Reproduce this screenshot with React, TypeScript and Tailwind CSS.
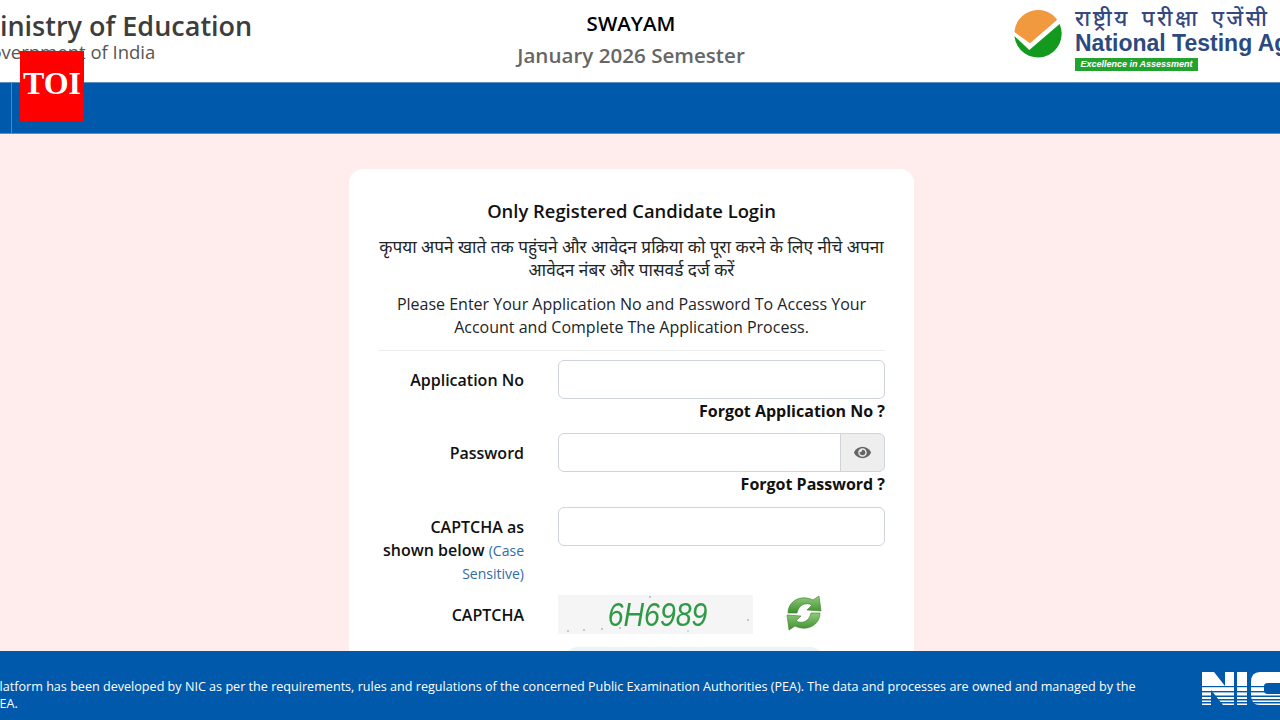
import React from 'react';
import { FaEye } from 'react-icons/fa';

const font = { fontFamily: '"Open Sans", "Noto Sans", sans-serif' };

const NtaLogo = () => (
  <svg width="50" height="50" viewBox="0 0 50 50" className="shrink-0">
    <path d="M0.36 23 L16 34.3 L43.2 10.8 A23.7 23.7 0 0 0 0.36 23 Z" fill="#f0993f" />
    <path d="M0.4 27 L15.3 41 L45.6 15 A23.7 23.7 0 1 1 0.4 27 Z" fill="#139a1e" />
  </svg>
);

const RefreshIcon = () => (
  <svg width="36" height="36" viewBox="0 0 36 36">
    <defs>
      <linearGradient id="swoosh" x1="0" y1="0" x2="0" y2="1">
        <stop offset="0" stopColor="#8fcb7c" />
        <stop offset="1" stopColor="#3f8f2e" />
      </linearGradient>
    </defs>
    <path d="M2 18 C2 6 15 -1 27 5 L33 1 L35 16 L21 15 L26 10 C20 7 13 9 11 18 Z" fill="url(#swoosh)" stroke="#3a7d2a" strokeWidth="0.6" />
    <path d="M34 18 C34 30 21 37 9 31 L3 35 L1 20 L15 21 L10 26 C16 29 23 27 25 18 Z" fill="url(#swoosh)" stroke="#3a7d2a" strokeWidth="0.6" />
  </svg>
);

const NicLogo = () => (
  <svg width="78" height="33" viewBox="0 0 78 33">
    <defs>
      <mask id="nic-lines">
        <rect width="78" height="33" fill="#fff" />
        <rect y="14" width="78" height="1.2" fill="#000" />
        <rect y="19" width="78" height="1.4" fill="#000" />
        <rect y="23.5" width="78" height="1.5" fill="#000" />
        <rect y="27" width="78" height="1.5" fill="#000" />
        <rect y="30" width="78" height="1.5" fill="#000" />
      </mask>
    </defs>
    <g fill="#fff" mask="url(#nic-lines)">
      <path d="M0 0 H12 L23 14 V0 H32 V33 H21 L9 18 V33 H0 Z" />
      <rect x="35" y="0" width="10" height="33" />
      <path d="M78 0 H58 Q49 0 49 10 V23 Q49 33 58 33 H78 V22 H66 Q62 22 62 19 V14 Q62 11 66 11 H78 Z" />
    </g>
  </svg>
);

const Label = ({ children }: { children: React.ReactNode }) => (
  <div className="w-[146px] shrink-0 text-right text-[16px] leading-[23px] font-semibold text-[#111]">{children}</div>
);

const TextInput = () => (
  <input className="w-full h-[39px] bg-white border border-[#ced4da] rounded-[6px]" />
);

const App: React.FC = () => {
  return (
    <div className="relative h-[720px] w-[1280px] overflow-hidden bg-[#ffeded]" style={font}>
      {/* Header */}
      <header className="h-[82px] bg-white flex justify-between overflow-hidden">
        <div className="w-[273px] -ml-[25px] pt-[8px] text-[#3d3d3d] shrink-0">
          <div className="text-[27px] leading-[36px] font-semibold whitespace-nowrap">Ministry of Education</div>
          <div className="text-[18.5px] leading-[15px] text-[#555] whitespace-nowrap pl-[2px]">Government of India</div>
        </div>
        <div className="flex-1 text-center pt-[9px]">
          <div className="text-[20.5px] leading-[28px] font-semibold text-black">SWAYAM</div>
          <div className="mt-[4px] text-[20.6px] leading-[28px] font-semibold text-[#666]">January 2026 Semester</div>
        </div>
        <div className="w-[266px] shrink-0 flex gap-[11px] pt-[9px] overflow-hidden">
          <NtaLogo />
          <div className="whitespace-nowrap" style={{ fontFamily: '"Liberation Sans", "Noto Sans", sans-serif' }}>
            <div className="text-[22px] leading-[20px] font-medium text-[#34497f] tracking-[2.6px] [word-spacing:3px]">राष्ट्रीय परीक्षा एजेंसी</div>
            <div className="text-[23px] leading-[28px] font-bold text-[#2c4a80]">National Testing Agency</div>
            <div className="mt-[1px] w-[123px] h-[13px] bg-[#22a32e] text-white text-[9px] leading-[13px] font-bold italic text-center">Excellence in Assessment</div>
          </div>
        </div>
      </header>

      {/* Nav bar */}
      <nav className="h-[52px] bg-[#0059aa] border-y border-[#5b8fc4] flex">
        <div className="w-[12px] h-full border-r border-[#4f86bf]" />
      </nav>

      {/* Login card */}
      <main className="flex justify-center pt-[35px] pr-[17px]">
        <div className="w-[565px] h-[560px] bg-white rounded-[14px] pl-[29px] pr-[29px] pt-[29px] shrink-0">
          <h1 className="text-center text-[18.4px] leading-[26px] font-semibold text-[#111]">Only Registered Candidate Login</h1>
          <p className="mt-[11px] text-center text-[17.2px] leading-[23px] text-[#212529]">
            कृपया अपने खाते तक पहुंचने और आवेदन प्रक्रिया को पूरा करने के लिए नीचे अपना आवेदन नंबर और पासवर्ड दर्ज करें
          </p>
          <p className="mt-[12px] text-center text-[16px] leading-[23px] text-[#212529] px-[10px]">
            Please Enter Your Application No and Password To Access Your Account and Complete The Application Process.
          </p>
          <hr className="mt-[11px] border-[#eeeeee]" />

          <div className="mt-[9px] flex gap-[34px]">
            <div className="pt-[9px]"><Label>Application No</Label></div>
            <div className="flex-1">
              <TextInput />
              <div className="mt-[1px] text-right text-[16px] leading-[23px] font-bold text-[#111]">Forgot Application No ?</div>
            </div>
          </div>

          <div className="mt-[10px] flex gap-[34px]">
            <div className="pt-[9px]"><Label>Password</Label></div>
            <div className="flex-1">
              <div className="flex h-[39px]">
                <input className="flex-1 min-w-0 bg-white border border-[#ced4da] rounded-l-[6px]" />
                <div className="w-[45px] -ml-px bg-[#eeeeee] border border-[#ced4da] rounded-r-[6px] flex items-center justify-center">
                  <FaEye size={17} className="text-[#666]" />
                </div>
              </div>
              <div className="mt-[1px] text-right text-[16px] leading-[23px] font-bold text-[#111]">Forgot Password ?</div>
            </div>
          </div>

          <div className="mt-[11px] flex gap-[34px]">
            <div className="pt-[9px]">
              <Label>
                CAPTCHA as shown below <span className="text-[14px] font-medium text-[#2f6ca8]">(Case Sensitive)</span>
              </Label>
            </div>
            <div className="flex-1"><TextInput /></div>
          </div>

          <div className="mt-[10px] flex gap-[34px]">
            <div className="pt-[9px]"><Label>CAPTCHA</Label></div>
            <div className="flex-1 flex items-start">
              <div className="relative w-[195px] h-[39px] bg-[#f4f5f4] flex items-center justify-center pl-[5px]">
                <svg className="absolute inset-0" width="195" height="39" viewBox="0 0 195 39">
                  <g fill="#b5bab5">
                    <circle cx="10" cy="36" r="1" />
                    <circle cx="26" cy="35" r="1" />
                    <circle cx="44" cy="34" r="1" />
                    <circle cx="62" cy="33" r="1" />
                    <circle cx="92" cy="2" r="1" />
                    <circle cx="190" cy="25" r="1" />
                    <circle cx="130" cy="36" r="0.8" />
                  </g>
                </svg>
                <span className="relative inline-block scale-x-[0.95] scale-y-[1.1] text-[30px] italic text-[#2f9a46]" style={{ fontFamily: '"Liberation Sans", sans-serif' }}>6H6989</span>
              </div>
              <div className="ml-[33px]"><RefreshIcon /></div>
            </div>
          </div>

          <div className="mt-[13px] ml-[186px] w-[260px] h-[40px] rounded-[14px] bg-[#e9f3f8]" />
        </div>
      </main>

      {/* Footer */}
      <footer className="absolute left-0 right-0 bottom-0 h-[69px] bg-[#0059aa] overflow-hidden">
        <p className="absolute left-[-8px] top-[27px] w-[1150px] text-[12.6px] leading-[17px] text-white">
          Platform has been developed by NIC as per the requirements, rules and regulations of the concerned Public Examination Authorities (PEA). The data and processes are owned and managed by the PEA.
        </p>
        <div className="absolute left-[1202px] top-[21px]"><NicLogo /></div>
      </footer>

      {/* TOI watermark */}
      <div className="absolute left-[20px] top-[51px] w-[64px] h-[70px] bg-[#ff0000] flex items-center justify-center pb-[6px] text-white text-[32px] font-bold" style={{ fontFamily: '"Liberation Serif", serif' }}>
        TOI
      </div>
    </div>
  );
};

export default App;
